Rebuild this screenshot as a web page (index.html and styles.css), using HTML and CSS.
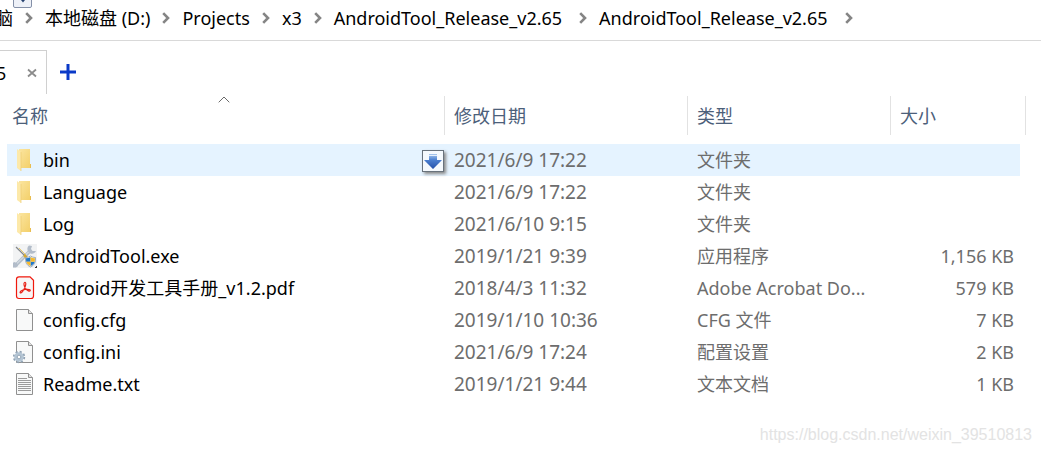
FILE: index.html
```html
<!DOCTYPE html>
<html lang="zh-CN">
<head>
<meta charset="utf-8">
<title>AndroidTool_Release_v2.65</title>
<link rel="stylesheet" href="styles.css">
</head>
<body>
<svg class="defs" width="0" height="0" aria-hidden="true">
  <defs>
    <linearGradient id="gold" x1="0" y1="0" x2="1" y2="1"><stop offset="0" stop-color="#fbe5a0"/><stop offset="1" stop-color="#f3cf68"/></linearGradient>
    <linearGradient id="blue" x1="0" y1="0" x2="0" y2="1"><stop offset="0" stop-color="#a9c8ee"/><stop offset=".4" stop-color="#4b7fd0"/><stop offset="1" stop-color="#2450a8"/></linearGradient>
    <symbol id="chevron" viewBox="0 0 8 12"><path d="M1.200 1.200 6 6 1.200 10.800" fill="none" stroke="#858585" stroke-width="2.600"/></symbol>
    <symbol id="folder" viewBox="0 0 24 24"><path d="M6 1h11v16h1v3H6z" fill="url(#gold)"/><path d="M17 16h1v4h-1z" fill="#e9bd50"/><path d="M4 1 8 4v19L4 20z" fill="#fde9a9"/><path d="M8 4v19" stroke="#edcb70" stroke-width=".7"/></symbol>
    <symbol id="page" viewBox="0 0 24 24"><path d="M3.500 1.500h12l4 4v17h-16z" fill="#f8f9f9" stroke="#909090"/><path d="M15.500 1.500v4h4" fill="#e3e3e3" stroke="#909090"/></symbol>
  </defs>
</svg>
<header class="address">
  <svg class="pin" viewBox="0 0 19 8" aria-hidden="true"><path d="M.5 0v6q0 1.500 1.500 1.500h15q1.500 0 1.500-1.500V0" fill="#eef1f8" stroke="#8490a8"/><path d="M8 0h4L10 2.500z" fill="#25416f"/></svg>
  <nav class="crumbs" aria-label="路径">
    <a href="#">脑</a><svg><use href="#chevron"/></svg>
    <a href="#">本地磁盘 (D:)</a><svg><use href="#chevron"/></svg>
    <a href="#">Projects</a><svg><use href="#chevron"/></svg>
    <a href="#">x3</a><svg><use href="#chevron"/></svg>
    <a class="long" href="#">AndroidTool_Release_v2.65</a><svg><use href="#chevron"/></svg>
    <a class="long" href="#">AndroidTool_Release_v2.65</a><svg><use href="#chevron"/></svg>
  </nav>
</header>
<div class="tabs">
  <div class="tab"><span class="tab-name">5</span>
    <button class="close" type="button" aria-label="关闭"><svg viewBox="0 0 10 10"><path d="M1 1.500 9 8.500M9 1.500 1 8.500" stroke="#8c8c8c" stroke-width="1.800"/></svg></button>
  </div>
  <button class="add" type="button" aria-label="新建标签"><svg viewBox="0 0 16 16"><path d="M8 0v16M0 8h16" stroke="#0a3ac8" stroke-width="3"/></svg></button>
</div>
<main>
<table class="files">
  <colgroup><col><col class="col-date"><col class="col-type"><col class="col-size"><col class="col-edge"></colgroup>
  <thead>
    <tr>
      <th><button type="button">名称<svg class="sort" viewBox="0 0 12 7"><path d="M.7 6.300 6 1l5.300 5.300" fill="none" stroke="#6a6a6a"/></svg></button></th>
      <th><button type="button">修改日期</button></th>
      <th><button type="button">类型</button></th>
      <th colspan="2"><button type="button">大小</button></th>
    </tr>
  </thead>
  <tbody>
    <tr class="hover">
      <td><div class="name"><svg><use href="#folder"/></svg><span>bin</span>
        <button class="drop" type="button" aria-label="展开"><svg viewBox="0 0 18 18"><path d="M5 2h8v6h5l-9 9-9-9h5z" fill="url(#blue)"/><path d="M5 3.500h8" stroke="#e5effb"/></svg></button></div></td>
      <td>2021/6/9 17:22</td><td>文件夹</td><td></td><td></td>
    </tr>
    <tr><td><div class="name"><svg><use href="#folder"/></svg><span>Language</span></div></td><td>2021/6/9 17:22</td><td>文件夹</td><td></td></tr>
    <tr><td><div class="name"><svg><use href="#folder"/></svg><span>Log</span></div></td><td>2021/6/10 9:15</td><td>文件夹</td><td></td></tr>
    <tr>
      <td><div class="name"><svg viewBox="0 0 24 24">
        <path d="M0 0h24v24H0z" fill="#f2f3f4"/>
        <path d="M3 21 18 6" stroke="#b6c0cb" stroke-width="3.500"/><path d="M3 20.500 18 5.500" stroke="#e3e8ed"/>
        <path d="M16 1.500c-2 1.500-2 4-1 6l2.500 2c2 .5 4.500 0 5.500-2.500l-3.500 0-1.500-2 1-3z" fill="#b2bcc9"/>
        <path d="M1 18l3 1 1 3-2 1.500H0V19z" fill="#b2bcc9"/>
        <path d="M3 3l9 9" stroke="#85898c" stroke-width="1.200"/><path d="M6 4l7 7" stroke="#e8cc73"/><path d="M11 11l3 3" stroke="#d5a92f" stroke-width="2.500"/>
        <path d="M12.500 13.500q3 0 5-1.500 2 1.500 5 1.500 .8 7-5 9.500-5.800-2.500-5-9.500z" fill="#f5f7f9" stroke="#8b9aab" stroke-width=".8"/>
        <path d="M17.500 13v4.800h-4.300l-.2-3.500q2.700 0 4.500-1.300zM17.500 17.800h4.300q-.8 3.200-4.300 4.500z" fill="#1f77c9"/>
        <path d="M17.500 13q1.800 1.300 4.500 1.300l-.2 3.500h-4.300zM17.500 17.800v4.500q-3.500-1.300-4.300-4.500z" fill="#f6b92d"/>
        <path d="M23 22h1v2h-2v-1h1z" fill="#333"/></svg><span>AndroidTool.exe</span></div></td>
      <td>2019/1/21 9:39</td><td>应用程序</td><td>1,156 KB</td>
    </tr>
    <tr>
      <td><div class="name"><svg viewBox="0 0 24 24"><path d="M6 .8h11l3.500 3.500V20q0 2.500-2.500 2.500H6Q3.500 22.500 3.500 20V3.300Q3.500.8 6 .8z" fill="#f8f6f6" stroke="#f0180c" stroke-width="1.200"/>
        <path d="M11.600 6.500c1.800-.5 1.400 2.800-.1 5.800-1.400 2.800-3.100 5-4.100 4.600-1.200-.8 1.100-2.900 5-3.500 3.100-.5 5.300.3 4.800 1.300-.8 1.100-3.200-.5-4.700-2.400-1.400-2-2.200-5.300-.9-5.800z" fill="none" stroke="#e82218" stroke-width="1.200"/></svg><span>Android开发工具手册_v1.2.pdf</span></div></td>
      <td>2018/4/3 11:32</td><td>Adobe Acrobat Do...</td><td>579 KB</td>
    </tr>
    <tr><td><div class="name"><svg><use href="#page"/></svg><span>config.cfg</span></div></td><td>2019/1/10 10:36</td><td>CFG 文件</td><td>7 KB</td></tr>
    <tr>
      <td><div class="name"><svg viewBox="0 0 24 24"><use href="#page" width="24" height="24"/>
        <circle cx="6" cy="17" r="5" fill="none" stroke="#91a3b4" stroke-width="2.400" stroke-dasharray="2 1.930"/><circle cx="6" cy="17" r="3.300" fill="#f3f6f8" stroke="#b4c5d4" stroke-width="3"/><circle cx="6" cy="17" r="1.800" fill="#fff" stroke="#8498aa" stroke-width=".8"/></svg><span>config.ini</span></div></td>
      <td>2021/6/9 17:24</td><td>配置设置</td><td>2 KB</td>
    </tr>
    <tr><td><div class="name"><svg viewBox="0 0 24 24"><use href="#page" width="24" height="24"/><path d="M5 6.500h9M5 8.500h13M5 10.500h13M5 12.500h13M5 14.500h13M5 16.500h13M5 18.500h13" stroke="#9b9b9b"/></svg><span>Readme.txt</span></div></td><td>2019/1/21 9:44</td><td>文本文档</td><td>1 KB</td></tr>
  </tbody>
</table>
</main>
<footer>https://blog.csdn.net/weixin_39510813</footer>
</body>
</html>
```
FILE: styles.css
```css
* { box-sizing: border-box; }
body {
  margin: 0;
  background: #fff;
  color: #000;
  font: 18px/24px "Noto Sans", "Noto Sans CJK SC", sans-serif;
  overflow-x: hidden;
}
button {
  border: 0;
  padding: 0;
  background: none;
  color: inherit;
  font: inherit;
}
svg { display: block; flex: none; }
.defs { position: absolute; }

.address {
  position: relative;
  height: 41px;
  border-bottom: 1px solid #d9d9d9;
}
.pin {
  position: absolute;
  top: 0;
  left: 13px;
  width: 19px;
  height: 8px;
}
.crumbs {
  display: flex;
  align-items: center;
  gap: 12px;
  margin-left: -5px;
  padding-top: 6px;
  white-space: nowrap;
}
.crumbs a { color: #000; text-decoration: none; }
.crumbs .long { padding-right: 5px; }
.crumbs svg { width: 8px; height: 12px; }

.tabs {
  display: flex;
  align-items: center;
  gap: 13px;
  height: 44px;
  margin-top: 9px;
}
.tab {
  display: flex;
  align-items: center;
  justify-content: space-between;
  width: 47px;
  height: 44px;
  padding-right: 9px;
  border: 1px solid #d0d0d0;
  border-width: 1px 1px 0 0;
}
.tab-name { margin-left: -4px; }
.close svg { width: 10px; height: 10px; }
.add svg { width: 16px; height: 16px; }

main { padding: 2px 15px 0 7px; }
.files {
  width: 100%;
  table-layout: fixed;
  border-collapse: collapse;
  color: #6d6d6d;
}
.col-date { width: 243px; }
.col-type { width: 203px; }
.col-size { width: 129px; }
.col-edge { width: 6px; }
th { padding: 0 0 9px; font-weight: 400; }
th button {
  position: relative;
  display: block;
  width: 100%;
  height: 39px;
  padding-left: 9px;
  border-right: 1px solid #e2e2e2;
  color: #4c607a;
  text-align: left;
}
th:first-child button { padding-left: 5px; }
.sort {
  position: absolute;
  top: 0;
  left: calc(50% - 8px);
  width: 12px;
  height: 7px;
}
td {
  height: 32px;
  padding: 0 0 0 9px;
  white-space: nowrap;
}
td:first-child { padding-left: 6px; color: #000; }
td:nth-child(2) { font-size: 19px; }
td:nth-child(4) { padding: 0 6px 0 0; text-align: right; }
.hover td:not(:last-child) { background: #e5f3ff; }
.name { display: flex; align-items: center; gap: 6px; }
.name > svg { width: 24px; height: 24px; }
.drop {
  margin: 1px 1px 0 auto;
  width: 22px;
  height: 22px;
  border: 1px solid #68727c;
  background: #f5f9fd;
  box-shadow: 2px 2px 3px #888;
}
.drop svg { width: 18px; height: 18px; margin: auto; }

footer {
  padding: 23px 9px 0 0;
  color: #e3e3e3;
  font: 16px/24px "Liberation Sans", Arial, sans-serif;
  text-align: right;
}
```
